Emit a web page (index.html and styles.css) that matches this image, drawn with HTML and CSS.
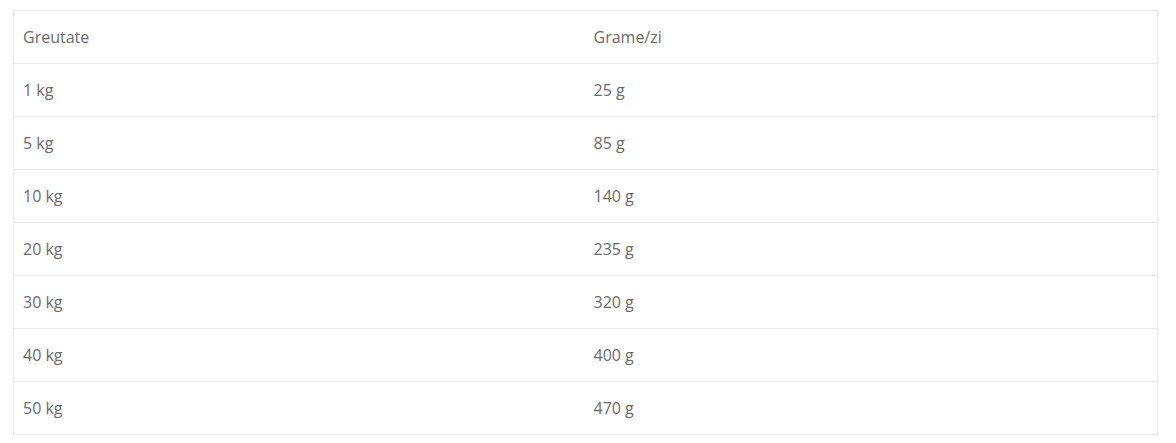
FILE: index.html
```html
<!DOCTYPE html>
<html lang="ro">
<head>
<meta charset="utf-8">
<title>Greutate</title>
<link rel="stylesheet" href="styles.css">
</head>
<body>
<div class="wrap">
<table class="feed">
<colgroup><col class="c1"><col class="c2"></colgroup>
<tbody>
<tr><td>Greutate</td><td>Grame/zi</td></tr>
<tr><td>1 kg</td><td>25 g</td></tr>
<tr><td>5 kg</td><td>85 g</td></tr>
<tr><td>10 kg</td><td>140 g</td></tr>
<tr><td>20 kg</td><td>235 g</td></tr>
<tr><td>30 kg</td><td>320 g</td></tr>
<tr><td>40 kg</td><td>400 g</td></tr>
<tr><td>50 kg</td><td>470 g</td></tr>
</tbody>
</table>
</div>
</body>
</html>
```
FILE: styles.css
```css
html, body {
  margin: 0;
  padding: 0;
  background: #fff;
}
.wrap {
  padding: 10px 18px 0 13px;
}
.feed {
  width: 1145px;
  border-collapse: collapse;
  table-layout: fixed;
  font-family: "Open Sans", "Liberation Sans", sans-serif;
  font-size: 16px;
  color: #6b6b6b;
}
.c1 { width: 571px; }
.feed td {
  border-top: 1px solid #ebebeb;
  border-bottom: 1px solid #ebebeb;
  padding: 16px 9px;
  line-height: 20px;
  height: 20px;
  vertical-align: middle;
}
.feed td:first-child {
  border-left: 1px solid #ebebeb;
}
.feed td:last-child {
  border-right: 1px solid #ebebeb;
}
```
